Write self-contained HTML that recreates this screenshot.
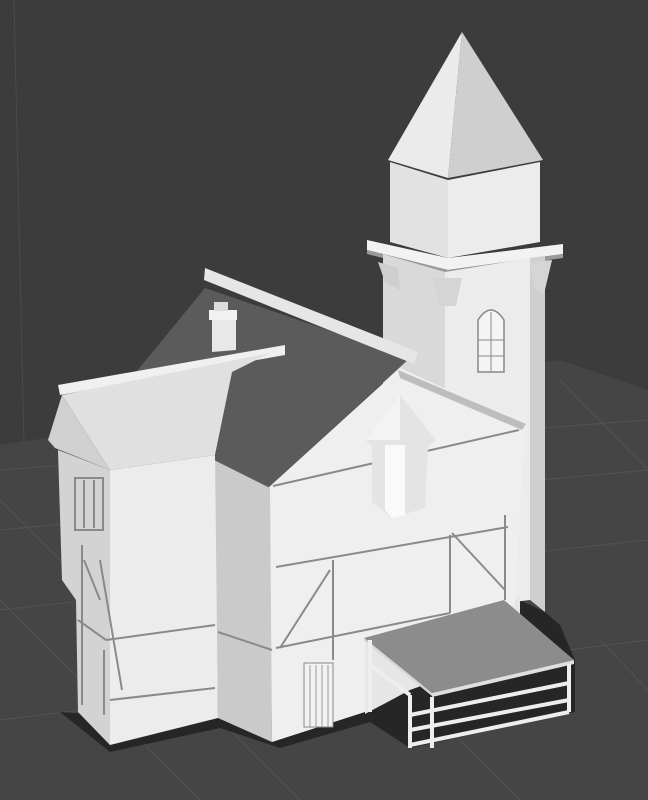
<!DOCTYPE html><html><head><style>html,body{margin:0;padding:0;background:#3b3b3b}svg{display:block}</style></head><body>
<svg width="648" height="800" viewBox="0 0 648 800" xmlns="http://www.w3.org/2000/svg">
<rect width="648" height="800" fill="#3c3c3c"/>
<polygon points="0,445 560,360 648,390 648,800 0,800" fill="#454545"/>
<g stroke="#535353" stroke-width="1">
<line x1="0" y1="470" x2="648" y2="420"/><line x1="0" y1="530" x2="648" y2="470"/><line x1="0" y1="610" x2="648" y2="540"/><line x1="0" y1="720" x2="648" y2="640"/>
<line x1="0" y1="500" x2="300" y2="800"/><line x1="0" y1="600" x2="200" y2="800"/><line x1="150" y1="430" x2="520" y2="800"/><line x1="560" y1="380" x2="648" y2="470"/><line x1="600" y1="640" x2="648" y2="690"/>
</g>
<line x1="14" y1="0" x2="24" y2="445" stroke="#4a4a4a"/>
<!-- shadow -->
<polygon points="60,712 110,752 220,728 280,748 370,722 410,748 575,712 575,660 560,625 545,612 520,600 230,700 100,715" fill="#262626"/>
<!-- tower -->
<polygon points="462,32 388,160 448,178" fill="#ebebeb"/>
<polygon points="462,32 448,178 543,160" fill="#cfcfcf"/>
<polygon points="390,162 448,180 448,258 390,242" fill="#e2e2e2"/>
<polygon points="448,180 540,162 540,242 448,258" fill="#ececec"/>
<polygon points="367,240 448,258 563,244 563,254 448,270 367,250" fill="#f2f2f2"/>
<polygon points="367,250 448,270 563,254 563,258 448,274 367,254" fill="#9a9a9a"/>
<polygon points="383,254 445,272 445,440 383,420" fill="#d9d9d9"/>
<polygon points="445,272 530,258 530,600 445,610" fill="#ececec"/>
<polygon points="530,258 545,256 545,612 530,600" fill="#cfcfcf"/>
<path d="M478,372 V320 Q491,300 504,320 V372 Z" fill="#f4f4f4" stroke="#888" stroke-width="1.5"/>
<line x1="491" y1="312" x2="491" y2="372" stroke="#888"/><line x1="478" y1="340" x2="504" y2="340" stroke="#888"/><line x1="478" y1="356" x2="504" y2="356" stroke="#888"/>
<polygon points="378,262 398,268 400,290 385,282" fill="#cfcfcf"/><polygon points="432,278 462,278 456,306 440,306" fill="#d5d5d5"/><polygon points="530,262 552,260 544,294 534,288" fill="#d5d5d5"/>
<!-- main roof -->
<polygon points="205,288 410,358 268,488 214,462 232,370 128,382" fill="#5b5b5b"/>
<polygon points="205,268 418,352 414,364 204,280" fill="#e6e6e6"/>
<!-- wall behind porch -->
<polygon points="365,640 520,598 520,650 410,690 365,714" fill="#e6e6e6"/>
<!-- front gable / main facade -->
<polygon points="400,368 525,425 515,605 365,645 365,712 272,742 268,488" fill="#efefef"/>
<polygon points="214,460 270,488 272,742 218,718" fill="#cacaca"/>
<polygon points="398,370 526,424 522,430 400,378" fill="#bdbdbd"/>
<g stroke="#8a8a8a" stroke-width="2" fill="none">
<line x1="273" y1="486" x2="519" y2="430"/><line x1="276" y1="567" x2="508" y2="527"/><line x1="276" y1="648" x2="450" y2="613"/>
<line x1="333" y1="560" x2="333" y2="660"/><line x1="450" y1="535" x2="450" y2="613"/><line x1="505" y1="515" x2="505" y2="600"/>
<line x1="280" y1="648" x2="330" y2="570"/><line x1="452" y1="533" x2="505" y2="590"/>
<line x1="272" y1="650" x2="218" y2="632"/>
</g>
<rect x="304" y="663" width="29" height="64" fill="#f2f2f2" stroke="#888"/>
<g stroke="#999"><line x1="310" y1="665" x2="310" y2="727"/><line x1="316" y1="665" x2="316" y2="727"/><line x1="322" y1="665" x2="322" y2="727"/><line x1="328" y1="665" x2="328" y2="727"/></g>
<!-- dormer turret -->
<polygon points="400,395 366,440 372,447 372,502 392,518 425,508 428,447 436,440" fill="#e4e4e4"/>
<polygon points="400,395 366,440 400,440" fill="#f3f3f3"/>
<polygon points="385,445 405,445 405,515 392,518 385,510" fill="#fafafa"/>
<!-- left wing -->
<polygon points="58,385 285,345 285,355 60,395" fill="#f0f0f0"/>
<polygon points="62,395 270,353 232,372 215,455 110,470" fill="#e0e0e0"/>
<polygon points="62,395 110,470 55,448 48,440" fill="#d0d0d0"/>
<polygon points="110,470 215,455 218,718 110,745" fill="#ececec"/>
<polygon points="58,450 110,470 110,745 78,712 76,600 62,580" fill="#d3d3d3"/>
<g stroke="#8a8a8a" stroke-width="2" fill="none">
<line x1="110" y1="700" x2="215" y2="688"/><line x1="106" y1="640" x2="215" y2="625"/><line x1="78" y1="620" x2="106" y2="640"/>
<rect x="75" y="478" width="28" height="52"/><line x1="84" y1="480" x2="84" y2="528"/><line x1="94" y1="480" x2="94" y2="528"/>
<line x1="84" y1="560" x2="100" y2="600"/><line x1="100" y1="560" x2="122" y2="690"/><line x1="82" y1="545" x2="82" y2="705"/><line x1="104" y1="650" x2="104" y2="715"/>
</g>
<!-- chimney -->
<polygon points="212,318 236,318 236,350 212,352" fill="#e8e8e8"/><rect x="209" y="310" width="28" height="10" fill="#f2f2f2"/><rect x="214" y="302" width="14" height="9" fill="#dcdcdc"/>
<!-- porch -->
<polygon points="364,638 504,600 574,660 432,693" fill="#8c8c8c"/>
<polygon points="364,638 432,693 432,696 364,641" fill="#d8d8d8"/>
<polygon points="432,693 574,660 574,664 432,697" fill="#e0e0e0"/>
<g stroke="#eeeeee" stroke-width="4" fill="none">
<line x1="410" y1="695" x2="410" y2="748"/><line x1="432" y1="697" x2="432" y2="748"/><line x1="569" y1="664" x2="569" y2="712"/>
<line x1="410" y1="715" x2="569" y2="683"/><line x1="410" y1="730" x2="569" y2="700"/><line x1="410" y1="745" x2="569" y2="712"/>
<line x1="370" y1="640" x2="370" y2="712"/><line x1="370" y1="665" x2="410" y2="695"/>
</g>
</svg></body></html>
